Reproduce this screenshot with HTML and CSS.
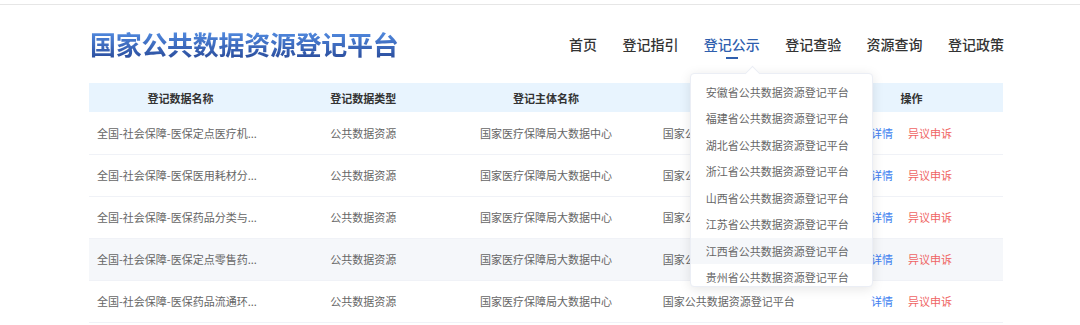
FILE: index.html
```html
<!DOCTYPE html>
<html lang="zh-CN">

<head>
    <meta charset="UTF-8">
    <meta name="viewport" content="width=device-width, initial-scale=1.0">
    <title>国家公共数据资源登记平台</title>
    <link rel="stylesheet" href="styles.css">
</head>

<body>
    <div class="topline"></div>
    <div class="container">
        <div class="header">
            <h1 class="logo">国家公共数据资源登记平台</h1>
            <ul class="nav">
                <li>首页</li>
                <li>登记指引</li>
                <li class="active">
                    登记公示
                    <div class="dropdown">
                        <ul>
                            <li>安徽省公共数据资源登记平台</li>
                            <li>福建省公共数据资源登记平台</li>
                            <li>湖北省公共数据资源登记平台</li>
                            <li>浙江省公共数据资源登记平台</li>
                            <li>山西省公共数据资源登记平台</li>
                            <li>江苏省公共数据资源登记平台</li>
                            <li class="hover">江西省公共数据资源登记平台</li>
                            <li>贵州省公共数据资源登记平台</li>
                        </ul>
                    </div>
                </li>
                <li>登记查验</li>
                <li>资源查询</li>
                <li>登记政策</li>
            </ul>
        </div>

        <table class="list">
            <thead>
                <tr>
                    <th>登记数据名称</th>
                    <th>登记数据类型</th>
                    <th>登记主体名称</th>
                    <th>登记机构</th>
                    <th>操作</th>
                </tr>
            </thead>
            <tbody>
                <tr>
                    <td class="name">全国-社会保障-医保定点医疗机...</td>
                    <td>公共数据资源</td>
                    <td>国家医疗保障局大数据中心</td>
                    <td>国家公共数据资源登记平台</td>
                    <td><a class="detail">详情</a><a class="appeal">异议申诉</a></td>
                </tr>
                <tr>
                    <td class="name">全国-社会保障-医保医用耗材分...</td>
                    <td>公共数据资源</td>
                    <td>国家医疗保障局大数据中心</td>
                    <td>国家公共数据资源登记平台</td>
                    <td><a class="detail">详情</a><a class="appeal">异议申诉</a></td>
                </tr>
                <tr>
                    <td class="name">全国-社会保障-医保药品分类与...</td>
                    <td>公共数据资源</td>
                    <td>国家医疗保障局大数据中心</td>
                    <td>国家公共数据资源登记平台</td>
                    <td><a class="detail">详情</a><a class="appeal">异议申诉</a></td>
                </tr>
                <tr class="hover">
                    <td class="name">全国-社会保障-医保定点零售药...</td>
                    <td>公共数据资源</td>
                    <td>国家医疗保障局大数据中心</td>
                    <td>国家公共数据资源登记平台</td>
                    <td><a class="detail">详情</a><a class="appeal">异议申诉</a></td>
                </tr>
                <tr>
                    <td class="name">全国-社会保障-医保药品流通环...</td>
                    <td>公共数据资源</td>
                    <td>国家医疗保障局大数据中心</td>
                    <td>国家公共数据资源登记平台</td>
                    <td><a class="detail">详情</a><a class="appeal">异议申诉</a></td>
                </tr>
            </tbody>
        </table>
    </div>
</body>

</html>
```

FILE: styles.css
```css
* {
    margin: 0;
    padding: 0;
    box-sizing: border-box;
}

body {
    font-family: "Noto Sans CJK SC", "Noto Sans", sans-serif;
    background-color: #fff;
    color: #333;
    overflow: hidden;
}

.topline {
    height: 5px;
    border-bottom: 1px solid #e6e6e6;
}

.container {
    width: 914px;
    margin-left: 89px;
}

/* header */
.header {
    height: 78px;
    display: flex;
    justify-content: space-between;
    align-items: center;
}

.logo {
    font-size: 26px;
    font-weight: 700;
    letter-spacing: -0.3px;
    line-height: 30px;
    margin-left: 1px;
    margin-top: -1px;
    background: linear-gradient(to bottom, #5590e6, #2a4c9c);
    -webkit-background-clip: text;
    background-clip: text;
    color: transparent;
}

.nav {
    list-style: none;
    display: flex;
    gap: 25.4px;
    margin-right: -1px;
    margin-top: -1px;
}

.nav > li {
    position: relative;
    font-size: 14px;
    font-weight: 500;
    line-height: 20px;
    color: #333;
}

.nav > li.active {
    color: #2f5fae;
}

.nav > li.active::after {
    content: "";
    position: absolute;
    left: 22px;
    top: 23px;
    width: 12px;
    height: 2px;
    background-color: #2f5fae;
}

/* dropdown */
.dropdown {
    position: absolute;
    left: -14px;
    top: 39px;
    width: 183px;
    height: 214px;
    background-color: #fff;
    border: 1px solid #ebeef5;
    border-radius: 4px;
    box-shadow: 0 2px 12px rgba(0, 0, 0, 0.1);
    z-index: 10;
}

.dropdown::before {
    content: "";
    position: absolute;
    left: 56px;
    top: -6px;
    width: 10px;
    height: 10px;
    background-color: #fff;
    border-left: 1px solid #ebeef5;
    border-top: 1px solid #ebeef5;
    transform: rotate(45deg);
}

.dropdown ul {
    list-style: none;
    height: 100%;
    overflow: hidden;
    padding-top: 5px;
    position: relative;
    border-radius: 4px;
}

.dropdown li {
    font-size: 11px;
    font-weight: 400;
    line-height: 26.5px;
    padding-left: 15px;
    color: #666;
    white-space: nowrap;
}

.dropdown li.hover {
    background-color: #f5f7fa;
}

/* table */
.list {
    width: 914px;
    border-collapse: collapse;
    table-layout: fixed;
    font-size: 11px;
}

.list th {
    height: 29px;
    background-color: #e8f4fe;
    font-weight: 700;
    color: #333;
    text-align: center;
}

.list td {
    height: 42px;
    color: #666;
    text-align: center;
    border-bottom: 1px solid #f0f2f7;
    white-space: nowrap;
}

.list td.name {
    text-align: left;
    padding-left: 8px;
}

.list tr.hover td {
    background-color: #f5f7fa;
}

.list a {
    cursor: pointer;
}

.detail {
    color: #3d7ef0;
}

.appeal {
    color: #ef6464;
    margin-left: 15px;
}
```
